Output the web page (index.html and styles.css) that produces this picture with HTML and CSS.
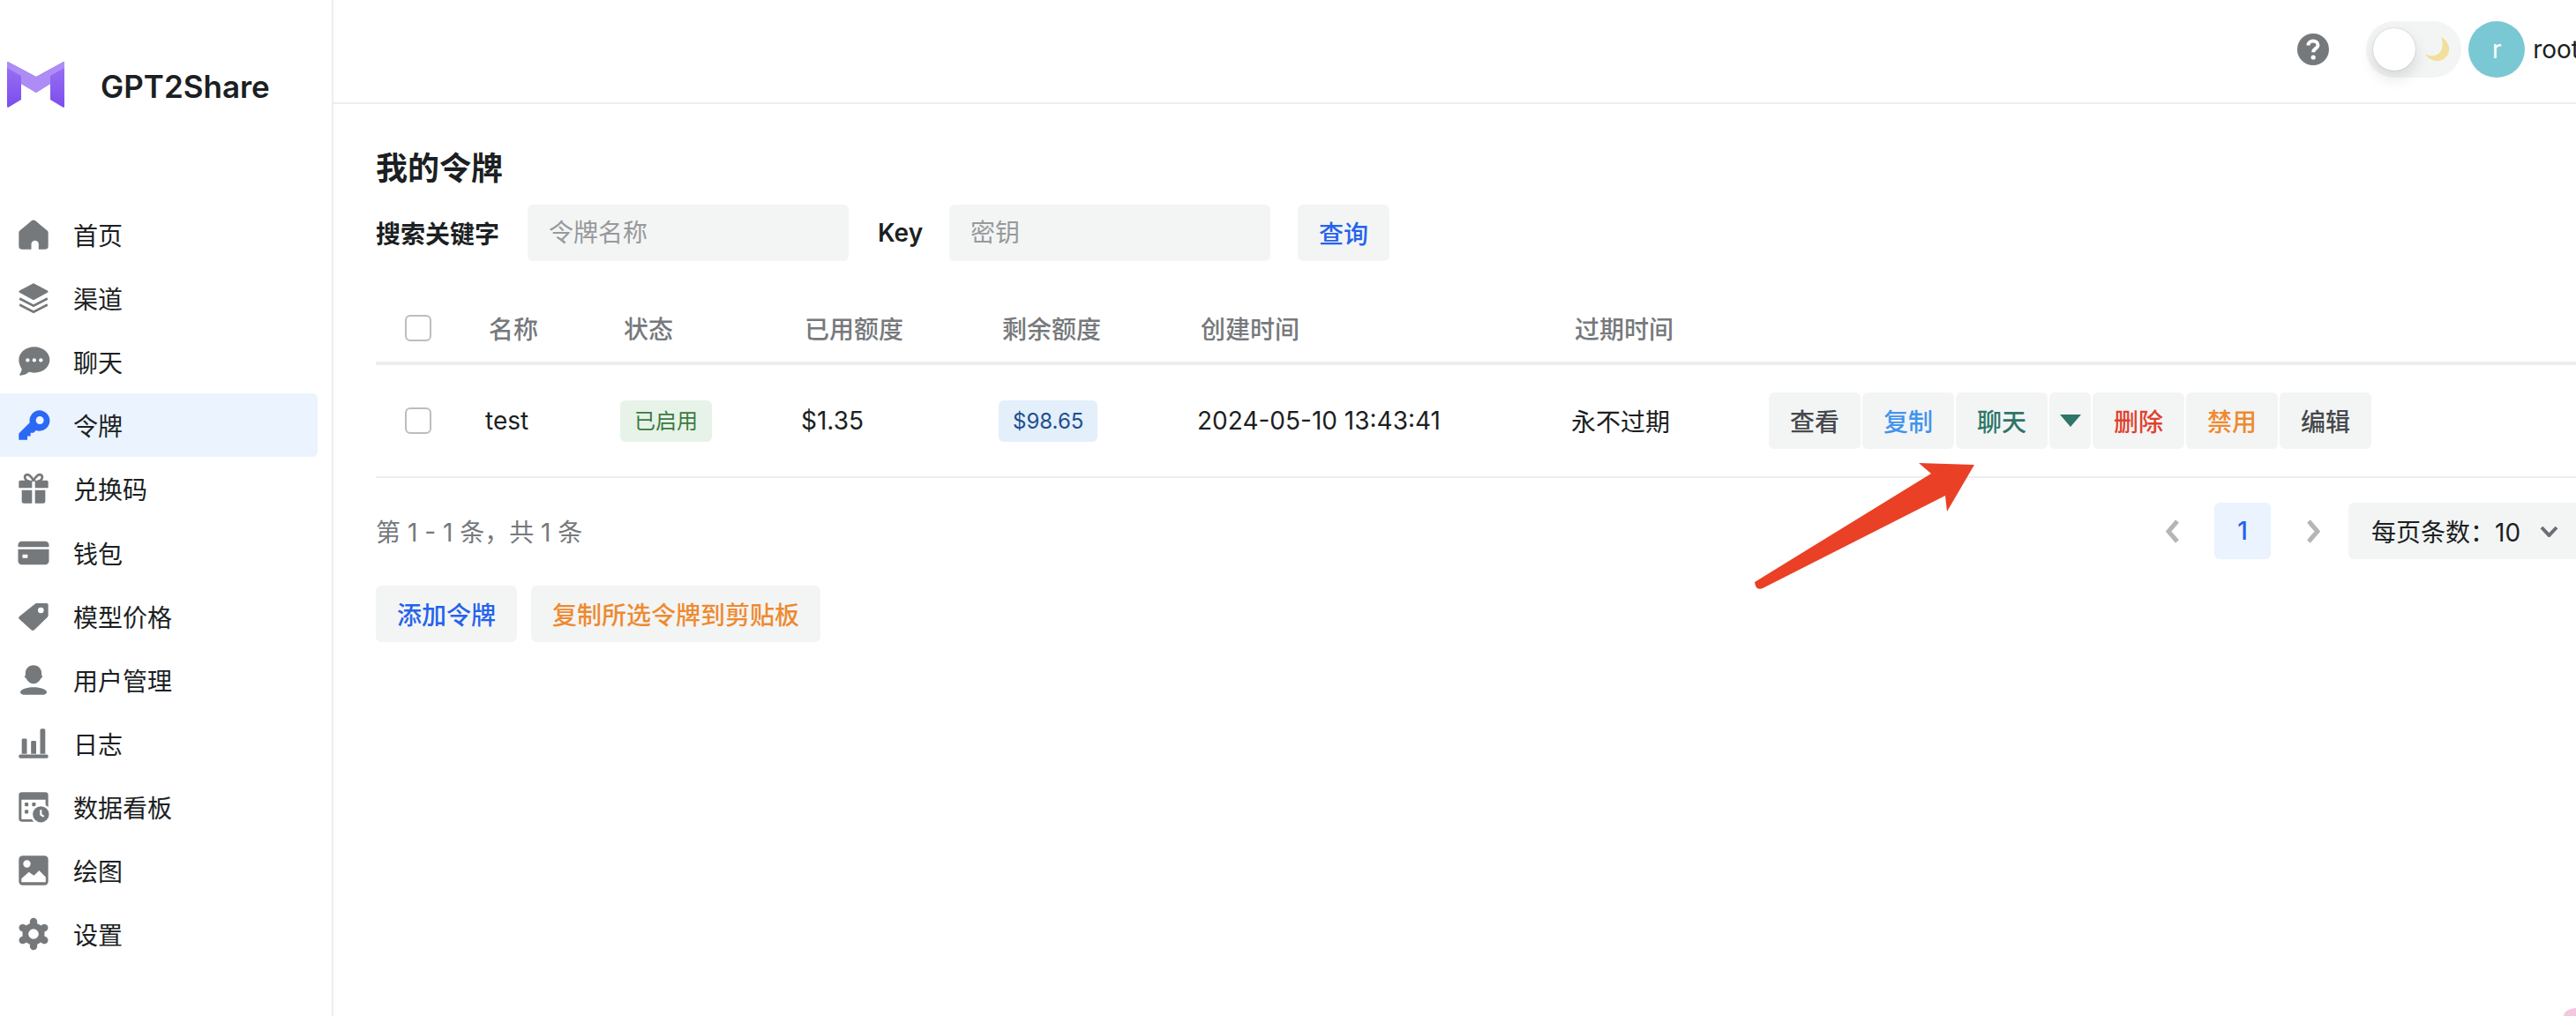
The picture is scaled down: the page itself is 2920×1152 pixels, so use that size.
FILE: index.html
```html
<!DOCTYPE html>
<html lang="zh-CN">
<head>
  <meta charset="UTF-8" />
  <title>GPT2Share</title>
  <link rel="stylesheet" href="styles.css">
</head>
<body>
  <aside class="sidebar">
    <div class="brand">
      <svg class="logo" viewBox="0 0 65 52">
        <defs>
          <linearGradient id="legGrad" x1="0" y1="0" x2="0" y2="1">
            <stop offset="0" stop-color="#9a74f3"/>
            <stop offset="1" stop-color="#7c4cee"/>
          </linearGradient>
        </defs>
        <path d="M1 0 33 17V35L16 25V43L1 52Q0 52 0 50V1Q0 0 1 0Z" fill="url(#legGrad)"/>
        <path d="M64 0 33 17V35L49 25V43L64 52Q65 52 65 50V1Q65 0 64 0Z" fill="url(#legGrad)"/>
        <path d="M1 0 33 17 64 0Q65 0 65 1V7L49 16V25L33 35 16 25V16L0 7V1Q0 0 1 0Z" fill="#ad8df5"/>
      </svg>
      <span class="brand-name">GPT2Share</span>
    </div>
    <nav class="nav">
      <a class="nav-item">
        <svg class="nav-icon" viewBox="0 0 24 24"><path d="M10.7 2.6a2 2 0 0 1 2.6 0l7.9 6.6a2 2 0 0 1 .8 1.5V20a2 2 0 0 1-2 2h-4.500v-3.500a2.500 2.500 0 0 0-5 0V22H4a2 2 0 0 1-2-2v-9.300a2 2 0 0 1 .8-1.500z"/></svg>
        <span>首页</span>
      </a>
      <a class="nav-item">
        <svg class="nav-icon" viewBox="0 0 24 24"><path d="M11.300 2.200a1.500 1.500 0 0 1 1.400 0l8.800 4.700c.6.300.6 1.100 0 1.400l-8.800 4.700a1.500 1.500 0 0 1-1.400 0L2.500 8.300c-.6-.3-.6-1.100 0-1.400z"/><path class="line" d="M2.500 12.300 12 17.200l9.500-4.900M2.500 16.500 12 21.400l9.500-4.900"/></svg>
        <span>渠道</span>
      </a>
      <a class="nav-item">
        <svg class="nav-icon" viewBox="0 0 24 24"><path d="M12.500 2C18.300 2 23 5.900 23 10.800s-4.700 8.800-10.500 8.800c-1.300 0-2.500-.2-3.600-.5-1.300 1.200-3.400 2.300-5.800 2.300-.6 0-.8-.5-.5-.9.8-.9 1.300-2.200 1.400-3.500C2.900 15.100 2 13 2 10.800 2 5.900 6.700 2 12.500 2z"/><circle class="hole" cx="8" cy="11" r="1.300"/><circle class="hole" cx="12.500" cy="11" r="1.300"/><circle class="hole" cx="17" cy="11" r="1.300"/></svg>
        <span>聊天</span>
      </a>
      <a class="nav-item active">
        <svg class="nav-icon" viewBox="0 0 24 24"><path fill-rule="evenodd" d="M16 2a7 7 0 1 1-2.300 13.600L12 17.300h-2v2.200H7.800V22H2v-4.300L9.400 10.300A7 7 0 0 1 16 2zm.3 4a2.700 2.700 0 1 0 0 5.400 2.700 2.700 0 0 0 0-5.400z"/></svg>
        <span>令牌</span>
      </a>
      <a class="nav-item">
        <svg class="nav-icon" viewBox="0 0 24 24"><path class="line" d="M12 7C10.500 3 8 2 6.800 2.800 5.300 3.800 6.300 7 9 7M12 7c1.500-4 4-5 5.200-4.200 1.500 1 .5 4.200-2.200 4.200"/><path d="M3 6.500h8v5H2v-4a1 1 0 0 1 1-1zM13 6.500h8a1 1 0 0 1 1 1v4h-9zM4 13h7v9H5.500A1.500 1.500 0 0 1 4 20.500zM13 13h7v7.500a1.500 1.500 0 0 1-1.500 1.500H13z"/></svg>
        <span>兑换码</span>
      </a>
      <a class="nav-item">
        <svg class="nav-icon" viewBox="0 0 24 24"><path fill-rule="evenodd" d="M1.500 6.500A2.500 2.500 0 0 1 4 4h16a2.500 2.500 0 0 1 2.500 2.500V8h-21zM1.500 9.500h21v8A2.500 2.500 0 0 1 20 20H4a2.500 2.500 0 0 1-2.500-2.500zM4.500 13v2.500h3.500V13z"/></svg>
        <span>钱包</span>
      </a>
      <a class="nav-item">
        <svg class="nav-icon" viewBox="0 0 24 24"><path fill-rule="evenodd" d="M14 3h7a1 1 0 0 1 1 1v7.300a1.500 1.500 0 0 1-.5 1.100l-9 8.700a1.500 1.500 0 0 1-2 0l-8-7.100a1.500 1.500 0 0 1 0-2.200L13 3.400A1.500 1.500 0 0 1 14 3zm3 2.800a2 2 0 1 0 0 4 2 2 0 0 0 0-4z"/></svg>
        <span>模型价格</span>
      </a>
      <a class="nav-item">
        <svg class="nav-icon" viewBox="0 0 24 24"><path d="M12 2c3.300 0 5.500 2.400 5.500 5.500v1.300c.6.200.7 1 .2 1.500-.4.400-.7.600-.9 1-.8 1.700-2.500 3.200-4.800 3.200s-4-1.500-4.800-3.200c-.2-.4-.5-.6-.9-1-.5-.5-.4-1.300.2-1.500V7.500C6.500 4.400 8.700 2 12 2z"/><path d="M3 20.300c0-1.800 4-3.300 9-3.300s9 1.500 9 3.300c0 1-1 1.700-2 1.700H5c-1 0-2-.7-2-1.700z"/></svg>
        <span>用户管理</span>
      </a>
      <a class="nav-item">
        <svg class="nav-icon" viewBox="0 0 24 24"><path d="M4 9.500a.8.800 0 0 1 .8-.8h1.900a.8.800 0 0 1 .8.800V19H4zM10.300 11a.8.800 0 0 1 .8-.8H13a.8.800 0 0 1 .8.800v8h-3.500zM16.500 3a1 1 0 0 1 1-1h1.500a1 1 0 0 1 1 1v16h-3.500zM3 19.500h18a1 1 0 0 1 1 1V21a1 1 0 0 1-1 1H3a1 1 0 0 1-1-1v-.5a1 1 0 0 1 1-1z"/></svg>
        <span>日志</span>
      </a>
      <a class="nav-item">
        <svg class="nav-icon" viewBox="0 0 24 24"><path fill-rule="evenodd" d="M4 2h16a2 2 0 0 1 2 2v16a2 2 0 0 1-2 2H4a2 2 0 0 1-2-2V4a2 2 0 0 1 2-2zM3.800 7v13a.4.4 0 0 0 .4.4H20a.4.4 0 0 0 .2-.4V7z"/><rect x="6" y="9" width="2.500" height="2.500" rx=".6"/><rect x="6" y="14" width="2.500" height="2.500" rx=".6"/><rect x="11" y="9" width="2.500" height="2.500" rx=".6"/><circle class="hole" cx="17" cy="17" r="7"/><circle cx="17" cy="17" r="5.500"/><path class="hand" d="M17 14v3.200l2 1.300"/></svg>
        <span>数据看板</span>
      </a>
      <a class="nav-item">
        <svg class="nav-icon" viewBox="0 0 24 24"><rect x="2" y="2" width="20" height="20" rx="2.500"/><circle class="hole" cx="7.500" cy="7.500" r="2.500"/><path class="hole" d="M3.800 20v-2.500l5-4.500 3.500 2.500 3.500-3.500 4.500 4.500V20z"/></svg>
        <span>绘图</span>
      </a>
      <a class="nav-item">
        <svg class="nav-icon" viewBox="0 0 24 24"><circle cx="12" cy="12" r="7.500"/><path class="tooth" d="M12 3.500v17M4.600 7.750l14.800 8.500M4.600 16.250l14.800-8.500"/><circle class="hole" cx="12" cy="12" r="3.500"/></svg>
        <span>设置</span>
      </a>
    </nav>
  </aside>

  <div class="main">
    <header class="topbar">
      <svg class="help" viewBox="0 0 36 36">
        <circle cx="18" cy="18" r="18" fill="#76797c"/>
        <path d="M12.500 13.500c0-3 2.500-5 5.500-5s5.500 2 5.500 4.800c0 3.700-5.300 3.700-5.300 8" fill="none" stroke="#fff" stroke-width="4"/>
        <circle cx="18.200" cy="27" r="2.600" fill="#fff"/>
      </svg>
      <div class="theme-toggle">
        <span class="thumb"></span>
        <svg class="moon" viewBox="0 0 28 28"><path d="M18 0C24 3 28 9 27 16 26 23 19 28 12 27 6 26 2 23 0 19 5 22 11 22 15 19 20 15 21 7 18 0Z" fill="#f2df9b"/></svg>
      </div>
      <div class="avatar">r</div>
      <span class="username">root</span>
    </header>

    <section class="content">
      <h2 class="page-title">我的令牌</h2>

      <div class="search-row">
        <label class="field-label">搜索关键字</label>
        <input class="text-input" type="text" placeholder="令牌名称" />
        <label class="field-label key-label">Key</label>
        <input class="text-input" type="text" placeholder="密钥" />
        <button class="btn btn-query">查询</button>
      </div>

      <div class="table">
        <div class="tr thead">
          <div class="td"><input class="check" type="checkbox" /></div>
          <div class="td">名称</div>
          <div class="td">状态</div>
          <div class="td">已用额度</div>
          <div class="td">剩余额度</div>
          <div class="td">创建时间</div>
          <div class="td">过期时间</div>
          <div class="td"></div>
        </div>
        <div class="tr tbody">
          <div class="td"><input class="check" type="checkbox" /></div>
          <div class="td">test</div>
          <div class="td"><span class="tag tag-green">已启用</span></div>
          <div class="td">$1.35</div>
          <div class="td"><span class="tag tag-blue">$98.65</span></div>
          <div class="td">2024-05-10 13:43:41</div>
          <div class="td">永不过期</div>
          <div class="td actions">
            <button class="btn btn-row c-dark">查看</button>
            <button class="btn btn-row c-sky">复制</button>
            <div class="split">
              <button class="btn btn-row c-teal">聊天</button>
              <button class="btn btn-caret"><svg class="caret" viewBox="0 0 24 14"><path d="M0 0H24L12 14Z"/></svg></button>
            </div>
            <button class="btn btn-row c-red">删除</button>
            <button class="btn btn-row c-orange">禁用</button>
            <button class="btn btn-row c-dark">编辑</button>
          </div>
        </div>
      </div>

      <div class="pager-row">
        <span class="pager-info">第 1 - 1 条，共 1 条</span>
        <div class="pager">
          <span class="page-arrow"><svg viewBox="0 0 15 27"><path d="M13 2 3 13.500 13 25"/></svg></span>
          <span class="page-num">1</span>
          <span class="page-arrow"><svg viewBox="0 0 15 27"><path d="M2 2 12 13.500 2 25"/></svg></span>
          <div class="page-size">
            <span>每页条数：10</span>
            <svg viewBox="0 0 21 13"><path d="M2 2 10.500 11 19 2"/></svg>
          </div>
        </div>
      </div>

      <div class="bottom-actions">
        <button class="btn btn-add">添加令牌</button>
        <button class="btn btn-copy-all">复制所选令牌到剪贴板</button>
      </div>
    </section>
  </div>

  <!-- annotation drawn over the screenshot -->
  <svg class="annotation" viewBox="0 0 2920 1152">
    <path d="M1989 660 2189 537 2175 525 2238 527 2207 580 2205 562 1998 667Q1990 670 1989 660Z" fill="#ea4025"/>
  </svg>
  <span class="corner-blob"></span>
</body>
</html>
```

FILE: styles.css
```css
* {
  box-sizing: border-box;
}
html, body {
  margin: 0;
  padding: 0;
  height: 100%;
}
body {
  display: flex;
  width: 2920px;
  height: 1152px;
  overflow: hidden;
  position: relative;
  background: #fff;
  color: #1c1f23;
  font-family: Inter, "Noto Sans CJK SC", sans-serif;
  font-size: 28px;
}
button, input {
  font-family: inherit;
  font-size: inherit;
}

/* sidebar */
.sidebar {
  flex: none;
  width: 378px;
  height: 100%;
  border-right: 2px solid #ededee;
}
.brand {
  display: flex;
  align-items: center;
  height: 192px;
  margin-bottom: 38px;
  padding-left: 8px;
}
.logo {
  width: 65px;
  height: 52px;
}
.brand-name {
  margin-left: 41px;
  padding-top: 4px;
  font-size: 35px;
  font-weight: 600;
}
.nav-item {
  display: flex;
  align-items: center;
  gap: 25px;
  width: 360px;
  height: 72.1px;
  padding-left: 18px;
  border-radius: 0 6px 6px 0;
}
.nav-item.active {
  background: #eaf3fe;
}
.nav-icon {
  width: 40px;
  height: 40px;
  fill: #76797c;
}
.nav-item.active .nav-icon {
  fill: #2b68f5;
}
.nav-icon .line {
  fill: none;
  stroke: #76797c;
  stroke-width: 1.600;
}
.nav-icon .hole {
  fill: #fff;
}
.nav-icon .hand {
  fill: none;
  stroke: #fff;
  stroke-width: 1.300;
}
.nav-icon .tooth {
  fill: none;
  stroke: #76797c;
  stroke-width: 5;
  stroke-linecap: round;
}

/* top bar */
.main {
  flex: none;
  width: 2566px;
}
.topbar {
  display: flex;
  align-items: center;
  justify-content: flex-end;
  height: 118px;
  padding: 0 20px 4px 0;
  border-bottom: 2px solid #ededee;
}
.help {
  width: 36px;
  height: 36px;
  margin-right: 42px;
}
.theme-toggle {
  display: flex;
  align-items: center;
  width: 108px;
  height: 64px;
  padding-left: 8px;
  margin-right: 8px;
  border-radius: 32px;
  background: #f3f5f5;
}
.thumb {
  width: 48px;
  height: 48px;
  border-radius: 50%;
  background: #fff;
  box-shadow: 0 8px 18px rgba(0, 0, 0, 0.12), 0 0 2px rgba(0, 0, 0, 0.2);
}
.moon {
  width: 28px;
  height: 28px;
  margin-left: 11px;
}
.avatar {
  width: 64px;
  height: 64px;
  margin-right: 9px;
  border-radius: 50%;
  background: #7ac8d3;
  color: #fff;
  text-align: center;
  line-height: 64px;
}

/* content */
.content {
  padding: 48px 0 0 48px;
}
.page-title {
  margin: 0 0 16px;
  font-size: 36px;
  line-height: 50px;
  font-weight: 600;
}
.search-row {
  display: flex;
  align-items: center;
  height: 64px;
  margin-bottom: 42px;
}
.field-label {
  margin-right: 32px;
  font-weight: 600;
}
.key-label {
  margin-left: 33px;
  margin-right: 30px;
}
.text-input {
  width: 364px;
  height: 64px;
  padding: 0 24px;
  border: none;
  border-radius: 6px;
  background: #f3f5f5;
  outline: none;
}
.text-input::placeholder {
  color: #97999b;
}
.btn {
  height: 64px;
  padding: 0;
  border: none;
  border-radius: 6px;
  background: #f3f5f5;
  font-weight: 500;
}
.btn-query {
  width: 104px;
  margin-left: 31px;
  color: #2563eb;
}

/* table */
.tr {
  display: grid;
  grid-template-columns: 124px 153px 205px 224px 225px 424px 224px 1fr;
  align-items: center;
}
.thead {
  height: 76px;
  padding-bottom: 4px;
  border-bottom: 4px solid #ededee;
  color: #76797c;
  font-weight: 500;
}
.thead .td {
  padding-left: 4px;
}
.tbody {
  height: 128px;
  border-bottom: 2px solid #ededee;
}
.check {
  appearance: none;
  display: block;
  width: 30px;
  height: 30px;
  margin: 0 0 0 33px;
  border: 2px solid #bcbdbf;
  border-radius: 6px;
  background: #fff;
}
.thead .td:first-child {
  padding-left: 0;
}
.tag {
  display: inline-block;
  height: 47px;
  padding: 0 16px;
  border-radius: 6px;
  font-size: 24px;
  line-height: 47px;
}
.tag-green {
  background: #e7f3e8;
  color: #3b7a3f;
}
.tag-blue {
  background: #e3effb;
  color: #1e4f8f;
}
.actions {
  display: flex;
  gap: 2px;
}
.split {
  display: flex;
  gap: 2px;
}
.btn-row {
  width: 104px;
}
.btn-caret {
  display: flex;
  align-items: center;
  justify-content: center;
  width: 47px;
}
.caret {
  width: 24px;
  height: 14px;
  fill: #2f7568;
}
.c-dark { color: #46494d; }
.c-sky { color: #4294ee; }
.c-teal { color: #2f7568; }
.c-red { color: #e0412f; }
.c-orange { color: #ee8a30; }

/* pagination */
.pager-row {
  display: flex;
  align-items: center;
  justify-content: space-between;
  height: 64px;
  margin-top: 28px;
}
.pager-info {
  color: #76797c;
}
.pager {
  display: flex;
  align-items: center;
  gap: 16px;
}
.page-arrow {
  display: flex;
  align-items: center;
  justify-content: center;
  width: 64px;
  height: 64px;
}
.page-arrow svg {
  width: 15px;
  height: 27px;
  fill: none;
  stroke: #b4b5b7;
  stroke-width: 5;
}
.page-num {
  width: 64px;
  height: 64px;
  border-radius: 6px;
  background: #eaf3fe;
  color: #2563eb;
  font-weight: 500;
  line-height: 64px;
  text-align: center;
}
.page-size {
  display: flex;
  align-items: center;
  justify-content: space-between;
  width: 282px;
  height: 64px;
  margin-left: -8px;
  padding: 0 44px 0 26px;
  border-radius: 6px;
  background: #f3f5f5;
}
.page-size svg {
  width: 21px;
  height: 13px;
  fill: none;
  stroke: #6b6e72;
  stroke-width: 4;
}

.bottom-actions {
  display: flex;
  gap: 16px;
  margin-top: 30px;
}
.btn-add {
  width: 160px;
  color: #2563eb;
}
.btn-copy-all {
  width: 328px;
  color: #ee8a30;
}

/* things that sit over the page */
.annotation {
  position: absolute;
  left: 0;
  top: 0;
  width: 2920px;
  height: 1152px;
  pointer-events: none;
}
.corner-blob {
  position: absolute;
  right: 0;
  bottom: 0;
  width: 14px;
  height: 9px;
  border-top-left-radius: 100%;
  background: #f5c6de;
}
```
